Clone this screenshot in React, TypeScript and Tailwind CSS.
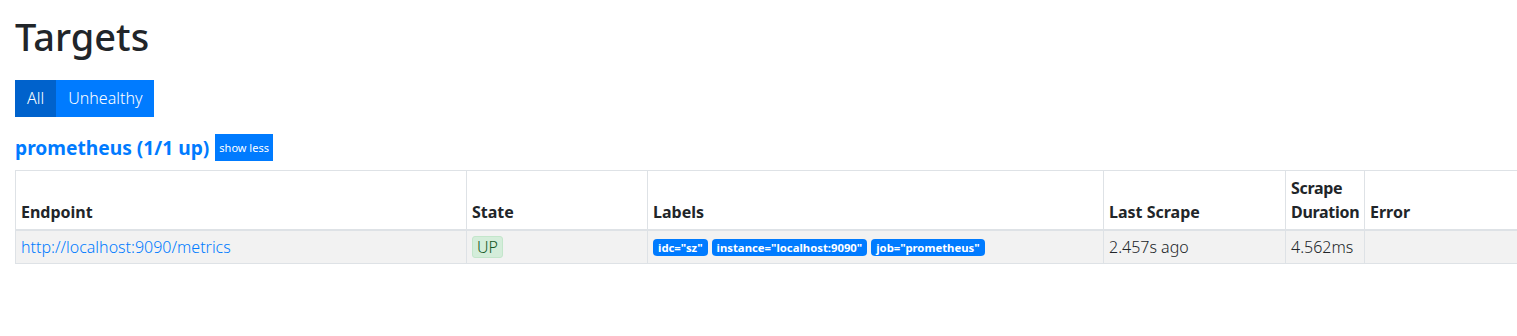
const labels = [
  { name: 'idc', value: 'sz' },
  { name: 'instance', value: 'localhost:9090' },
  { name: 'job', value: 'prometheus' },
]

const th = 'border border-[#dee2e6] border-b-2 px-[5px] py-[5px] text-left align-bottom font-bold'
const td = 'border border-[#dee2e6] px-[5px] py-[4px] align-top'

export default function App() {
  return (
    <div
      className="w-full overflow-hidden bg-white text-[16px] leading-[1.5] text-[#212529]"
      style={{ fontFamily: '"Noto Sans", "Open Sans", sans-serif' }}
    >
      <div className="pl-[15px] pt-[14px] w-[1560px]">
        <h1 className="text-[38px] leading-[1.2] font-medium mb-[20px]">Targets</h1>
        <div className="flex">
          <button className="bg-[#0062cc] text-white px-[12px] h-[37px] font-light">All</button>
          <button className="bg-[#007bff] text-white px-[12px] h-[37px] font-light">Unhealthy</button>
        </div>
        <h2 className="mt-[17px] flex items-center gap-[6px] text-[19.2px] font-bold leading-[1.2]">
          <a className="text-[#007bff]" href="#job-prometheus">prometheus (1/1 up)</a>
          <button className="bg-[#007bff] text-white text-[11px] font-normal px-[4px] h-[27px]">show less</button>
        </h2>
        <table className="mt-[9px] table-fixed border-collapse w-[1545px]">
          <colgroup>
            <col className="w-[451px]" />
            <col className="w-[181px]" />
            <col className="w-[456px]" />
            <col className="w-[182px]" />
            <col className="w-[79px]" />
            <col className="w-[196px]" />
          </colgroup>
          <thead>
            <tr className="border-t border-[#dee2e6]">
              <th className={th}>Endpoint</th>
              <th className={th}>State</th>
              <th className={th}>Labels</th>
              <th className={th}>Last Scrape</th>
              <th className={th + ' tracking-[-0.3px]'}>Scrape Duration</th>
              <th className={th}>Error</th>
            </tr>
          </thead>
          <tbody>
            <tr className="bg-[#f2f2f2]">
              <td className={td}>
                <a className="text-[#007bff] font-light" href="#">http://localhost:9090/metrics</a>
              </td>
              <td className={td}>
                <span className="inline-block rounded-[3px] border border-[#c3e6cb] bg-[#d4edda] px-[4px] leading-[20px] text-[#155724] font-light">
                  UP
                </span>
              </td>
              <td className={td}>
                <div className="flex gap-[4px] pt-[4px]">
                  {labels.map((l) => (
                    <span
                      key={l.name}
                      className="rounded-[4px] bg-[#007bff] px-[5px] text-[11.3px] font-bold leading-[17px] text-white"
                    >
                      {l.name}="{l.value}"
                    </span>
                  ))}
                </div>
              </td>
              <td className={td + ' font-light'}>2.457s ago</td>
              <td className={td + ' font-light'}>4.562ms</td>
              <td className={td}></td>
            </tr>
          </tbody>
        </table>
      </div>
    </div>
  )
}
